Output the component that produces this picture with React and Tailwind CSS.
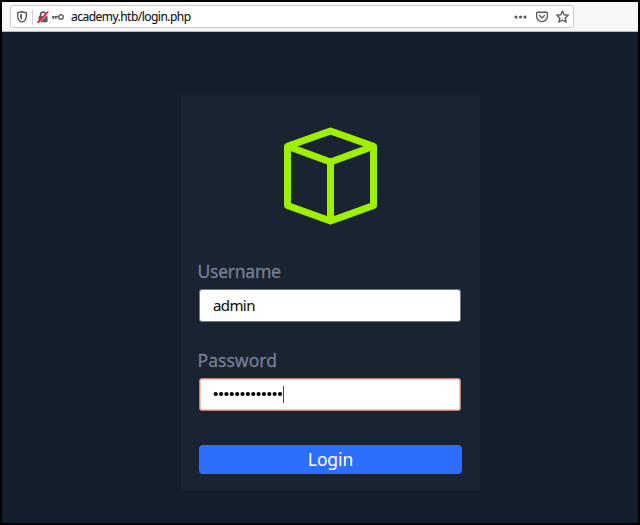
import React from "react";

function Shield() {
  return (
    <svg className="h-3 w-3 shrink-0" viewBox="0 0 12 12" fill="none" stroke="#5c5c60">
      <path d="M6 .8 10.300 1.700v3.500c0 3-1.900 5-4.300 6-2.400-1-4.300-3-4.300-6V1.700Z" strokeWidth="1.400" strokeLinejoin="round" />
      <path d="M6 3v6C4.600 8 4 6.600 4 5V3.400Z" fill="#5c5c60" stroke="none" />
    </svg>
  );
}

function InsecureLock() {
  return (
    <svg className="h-3 w-3 shrink-0" viewBox="0 0 12 12" fill="none">
      <path d="M3.600 5.500V3.600a2.500 2.500 0 0 1 5 0v1.900" stroke="#5c5c60" strokeWidth="1.700" />
      <rect x="1.600" y="5" width="9" height="6.300" rx="1" fill="#5c5c60" />
      <path d="M1.800 12 11.800 1.600" stroke="#fff" strokeWidth="1" />
      <path d="M1 11.300 10.800 1" stroke="#f0143f" strokeWidth="1.700" strokeLinecap="round" />
    </svg>
  );
}

function Key() {
  return (
    <svg className="h-3 w-3 shrink-0" viewBox="0 0 12 12" fill="none" stroke="#66666a">
      <circle cx="9" cy="6" r="2.200" strokeWidth="1.500" />
      <path d="M0 5.700h6.800M1.200 6v2M3.800 6v2" strokeWidth="1.500" />
    </svg>
  );
}

function Pocket() {
  return (
    <svg className="h-3 w-3 shrink-0" viewBox="0 0 12 12" fill="none" stroke="#5c5c60" strokeWidth="1.400" strokeLinecap="round" strokeLinejoin="round">
      <path d="M1.600 1.200h8.800q1 0 1 1v3a5.400 5.400 0 0 1-10.800 0v-3q0-1 1-1Z" />
      <path d="m3.500 4.600 2.500 2.300 2.500-2.300" />
    </svg>
  );
}

function Star() {
  return (
    <svg className="h-[13px] w-[13px] shrink-0" viewBox="0 0 13 13" fill="none" stroke="#5c5c60" strokeWidth="1.400" strokeLinejoin="round">
      <path d="m6.500 1 1.600 3.800 4.200.4-3.100 2.800.9 4.100-3.600-2.100-3.600 2.100.9-4.100L.7 5.200l4.200-.4Z" />
    </svg>
  );
}

function Cube() {
  return (
    <svg className="mx-auto block h-[98px] w-[94px]" viewBox="0 0 94 98" fill="none" stroke="#9fef00" strokeWidth="7" strokeLinejoin="round">
      <path d="M46.500 4 89.500 19.300V78.500L46.500 94 3.500 78.500V19.300Z" />
      <path d="M3.500 19.300 46.500 35 89.500 19.300M46.500 34V94" />
    </svg>
  );
}

function PasswordDots() {
  return (
    <svg className="block h-[6px] w-[70px] shrink-0" viewBox="0 0 70 6" fill="#000">
      {Array.from({ length: 13 }, (_, i) => (
        <circle key={i} cx={2.7 + i * 5.36} cy="3" r="2.1" />
      ))}
    </svg>
  );
}

export default function App() {
  return (
    <div className="relative flex h-[525px] w-[640px] flex-col overflow-hidden border-2 border-black bg-[#141d2b] font-['Noto_Sans',sans-serif]">
      <header className="h-[30px] shrink-0 border-b border-[#b9bcc0] bg-[#f7f7f8] pl-2 pt-[3px]">
        <div className="flex h-[23px] w-[564px] items-center rounded-[3px] border border-[#cbcbcd] bg-white pl-[5px] pr-1">
          <Shield />
          <span className="ml-[4px] h-4 w-px bg-[#d2d2d4]" />
          <span className="ml-[4px] flex"><InsecureLock /></span>
          <span className="ml-[3px] flex"><Key /></span>
          <span className="ml-[7px] whitespace-nowrap pt-px text-[12px] leading-none tracking-[-0.530px] text-[#111] [-webkit-text-stroke:0.100px_#111]">academy.htb/login.php</span>
          <svg className="ml-auto h-[4px] w-[13px]" viewBox="0 0 13 4" fill="#5c5c60">
            <circle cx="2" cy="2" r="1.600" />
            <circle cx="6.500" cy="2" r="1.600" />
            <circle cx="11" cy="2" r="1.600" />
          </svg>
          <span className="ml-[9px] flex"><Pocket /></span>
          <span className="ml-[8px] flex"><Star /></span>
        </div>
      </header>
      <main className="flex flex-1 pl-[179px] pt-[63px]">
        <form className="h-[396px] w-[299px] bg-[#1a2332] pt-8" onSubmit={(e) => e.preventDefault()}>
          <Cube />
          <label htmlFor="user" className="ml-[16.500px] mt-[38px] block h-[26px] text-[17.500px] leading-[17px] tracking-[-0.250px] text-[#767e91] [-webkit-text-stroke:0.300px_#767e91]">Username</label>
          <input id="user" defaultValue="admin" className="ml-[18px] block h-[33px] w-[262px] rounded-[3px] border border-[#6f7987] bg-white px-[13px] pb-px text-[15px] tracking-[-0.600px] text-[#111] outline-none [-webkit-text-stroke:0.100px_#111]" />
          <label htmlFor="pass" className="ml-[16.500px] mt-[30px] block h-[26px] text-[17.500px] leading-[17px] tracking-[0.050px] text-[#767e91] [-webkit-text-stroke:0.300px_#767e91]">Password</label>
          <div id="pass" className="ml-[18px] flex h-[33px] w-[262px] items-center rounded-[3px] border border-[#bd8579] bg-white pb-px pl-[13px] shadow-[inset_0_0_0_1px_#fbc4b1]">
            <PasswordDots />
            <span className="h-[17px] w-px bg-[#444]" />
          </div>
          <button className="ml-[18px] mt-[34px] flex h-[29px] w-[263px] items-center justify-center rounded-[4px] bg-[#2e6eff] pt-px text-[17.500px] leading-none tracking-[-0.100px] text-white">Login</button>
        </form>
      </main>
      <span className="absolute -right-[2px] top-[268px] h-[3px] w-[2px] bg-[#d8d8dd] [clip-path:polygon(0_0,100%_0,100%_100%,50%_100%)]" />
    </div>
  );
}
